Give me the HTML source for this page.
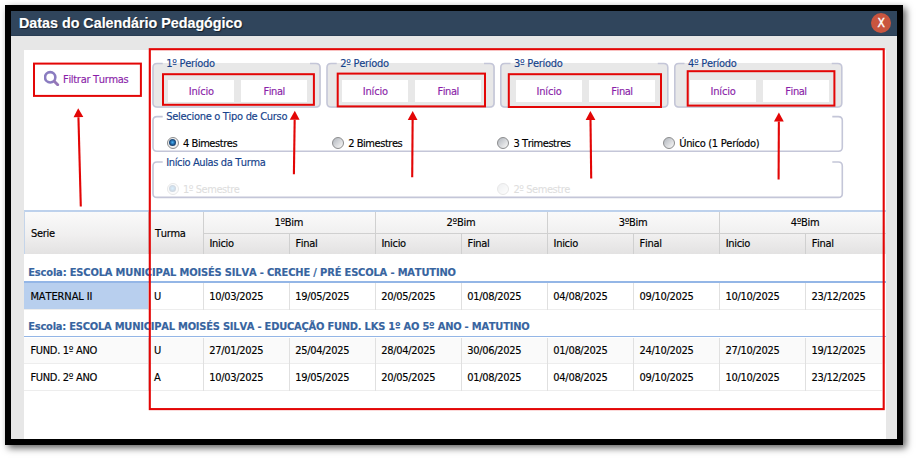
<!DOCTYPE html>
<html><head><meta charset="utf-8"><title>Datas do Calendário Pedagógico</title>
<style>
*{box-sizing:border-box;margin:0;padding:0}
html,body{width:916px;height:458px;background:#fff;overflow:hidden}
body{position:relative;font-family:"DejaVu Sans Condensed","Liberation Sans",sans-serif;font-size:11px;color:#000;letter-spacing:-0.3px;-webkit-text-stroke:0.15px;font-variant-ligatures:none;font-kerning:none}
.abs{position:absolute}
#frame{left:5px;top:5px;width:898px;height:440px;background:#000;box-shadow:3px 3px 7px rgba(0,0,0,.62)}
#title{left:11px;top:11px;width:886.2px;height:25px;background:#30455c;border-bottom:1px solid #293d53;color:#fff;font:bold 14.3px "Liberation Sans",sans-serif;letter-spacing:0;line-height:24px;padding-left:8px;text-shadow:1px 1px 1px rgba(0,0,0,.55)}
#close{letter-spacing:0;left:871.3px;top:12.8px;width:20px;height:20px;border-radius:10px;background:#c9553f;color:#fff;font:12px "DejaVu Sans Condensed","Liberation Sans",sans-serif;text-align:center;line-height:20px;-webkit-text-stroke:0.35px}
#body{left:11px;top:36px;width:886.2px;height:403px;background:#e7e7e7}
#panel{left:24.3px;top:50px;width:861.5px;height:389px;background:#fff}
.fs{border:2px solid #d0d2e1;border-radius:5px}
.leg{color:#15428b;line-height:13px;white-space:nowrap}
.btn{background:#fff;color:#8b1fa9;letter-spacing:-0.15px;text-align:center;white-space:nowrap}
.radio{width:12.3px;height:12.3px;border-radius:50%;border:1.5px solid #8b8c8d;background:linear-gradient(135deg,#bcc0c6 15%,#f0f0f0 85%)}
.radio.on{background:#f0f0f0}
.radio.on::after{content:"";position:absolute;left:1.4px;top:1.4px;width:7.1px;height:7.1px;border-radius:50%;background:radial-gradient(circle at 50% 48%,#4db4f2 0,#2c80c2 28%,#1a4a7e 55%,#14304f 100%)}
.lbl{white-space:nowrap;line-height:13px}
.dis{opacity:.13}
.radio.dis{opacity:.2}
.hd{background:linear-gradient(#fafafa,#f0efef 55%,#e3e2e2);}
.hc{white-space:nowrap;line-height:13px}
.vl{width:1px;background:#d0d0d0}
.grp{color:#3764a0;font-weight:bold;letter-spacing:-0.13px;white-space:nowrap;line-height:13px}
.gl{height:1.7px;background:#94b6e6}
.cell{white-space:nowrap;line-height:13px}
</style></head><body>
<div id="frame" class="abs"></div>
<div id="title" class="abs">Datas do Calendário Pedagógico</div>
<div id="body" class="abs"></div>
<div id="close" class="abs">X</div>
<div id="panel" class="abs"></div>
<div class="abs" style="left:44px;top:70px;width:16px;height:16px"><svg width="16" height="16" viewBox="0 0 16 16"><circle cx="6.2" cy="7.3" r="5.15" fill="none" stroke="#8a7cc0" stroke-width="2.6"/><line x1="10.2" y1="11.3" x2="13.7" y2="14.8" stroke="#9577b8" stroke-width="2.9" stroke-linecap="round"/></svg></div>
<div class="abs lbl" style="left:63px;top:73px;color:#8b1fa9">Filtrar Turmas</div>
<div class="abs" style="left:152.5px;top:63px;width:168px;height:44.5px;background:#e8e8e8;border-radius:5px"></div>
<div class="abs leg" style="left:166.3px;top:56.7px">1º Período</div>
<div class="abs btn" style="left:168.4px;top:79.5px;width:65.8px;height:22.5px;line-height:24.5px">Início</div>
<div class="abs btn" style="left:241.3px;top:79.5px;width:65.8px;height:22.5px;line-height:24.5px;letter-spacing:-0.45px">Final</div>
<div class="abs" style="left:326.5px;top:63px;width:168px;height:44.5px;background:#e8e8e8;border-radius:5px"></div>
<div class="abs leg" style="left:340.3px;top:56.7px">2º Período</div>
<div class="abs btn" style="left:342.4px;top:79.5px;width:65.8px;height:22.5px;line-height:24.5px">Início</div>
<div class="abs btn" style="left:415.3px;top:79.5px;width:65.8px;height:22.5px;line-height:24.5px;letter-spacing:-0.45px">Final</div>
<div class="abs" style="left:500.3px;top:63px;width:168px;height:44.5px;background:#e8e8e8;border-radius:5px"></div>
<div class="abs leg" style="left:514.1px;top:56.7px">3º Período</div>
<div class="abs btn" style="left:516.2px;top:79.5px;width:65.8px;height:22.5px;line-height:24.5px">Início</div>
<div class="abs btn" style="left:589.1px;top:79.5px;width:65.8px;height:22.5px;line-height:24.5px;letter-spacing:-0.45px">Final</div>
<div class="abs" style="left:674.3px;top:63px;width:168px;height:44.5px;background:#e8e8e8;border-radius:5px"></div>
<div class="abs leg" style="left:688.1px;top:56.7px">4º Período</div>
<div class="abs btn" style="left:690.2px;top:79.5px;width:65.8px;height:22.5px;line-height:24.5px">Início</div>
<div class="abs btn" style="left:763.1px;top:79.5px;width:65.8px;height:22.5px;line-height:24.5px;letter-spacing:-0.45px">Final</div>
<div class="abs leg" style="left:166.3px;top:109.8px">Selecione o Tipo de Curso</div>
<div class="abs radio on" style="left:166.6px;top:136.8px"></div><div class="abs lbl" style="left:183px;top:137px;letter-spacing:-0.45px">4 Bimestres</div>
<div class="abs radio" style="left:331.8px;top:136.8px"></div><div class="abs lbl" style="left:348.2px;top:137px;letter-spacing:-0.45px">2 Bimestres</div>
<div class="abs radio" style="left:497.1px;top:136.8px"></div><div class="abs lbl" style="left:513.5px;top:137px;letter-spacing:-0.45px">3 Trimestres</div>
<div class="abs radio" style="left:662.8px;top:136.8px"></div><div class="abs lbl" style="left:679.2px;top:137px;letter-spacing:-0.45px"><span style="letter-spacing:-0.3px">Único (1 Período)</span></div>
<div class="abs leg" style="left:166.3px;top:155.7px"><span style="letter-spacing:-0.38px">Início Aulas da Turma</span></div>
<div class="abs radio dis on" style="left:166.6px;top:182.8px"></div><div class="abs lbl dis" style="left:183px;top:183px;letter-spacing:-0.45px">1º Semestre</div>
<div class="abs radio dis" style="left:497.1px;top:182.8px"></div><div class="abs lbl dis" style="left:513.5px;top:183px;letter-spacing:-0.45px">2º Semestre</div>
<svg class="abs" style="left:0;top:0" width="916" height="458" viewBox="0 0 916 458"><path d="M162.7 63.5 H157 Q153 63.5 153 67.5 V103 Q153 107 157 107 H316 Q320 107 320 103 V67.5 Q320 63.5 316 63.5 H310 M336.7 63.5 H331 Q327 63.5 327 67.5 V103 Q327 107 331 107 H490 Q494 107 494 103 V67.5 Q494 63.5 490 63.5 H484 M510.5 63.5 H504.8 Q500.8 63.5 500.8 67.5 V103 Q500.8 107 504.8 107 H663.8 Q667.8 107 667.8 103 V67.5 Q667.8 63.5 663.8 63.5 H657.8 M684.5 63.5 H678.8 Q674.8 63.5 674.8 67.5 V103 Q674.8 107 678.8 107 H837.8 Q841.8 107 841.8 103 V67.5 Q841.8 63.5 837.8 63.5 H831.8 M162.7 116.6 H157 Q153 116.6 153 120.6 V147.2 Q153 151.2 157 151.2 H838.3 Q842.3 151.2 842.3 147.2 V120.6 Q842.3 116.6 838.3 116.6 H832.3 M162.7 162 H157 Q153 162 153 166 V193.4 Q153 197.4 157 197.4 H838.3 Q842.3 197.4 842.3 193.4 V166 Q842.3 162 838.3 162 H832.3" fill="none" stroke="#c4c6d8" stroke-width="1.6"/></svg>
<div class="abs" style="left:24px;top:210.4px;width:862px;height:1.9px;background:#bdd1ec"></div>
<div class="abs hd" style="left:24px;top:212px;width:862px;height:42.3px"></div>
<div class="abs vl" style="left:147.6px;top:212px;height:42px"></div>
<div class="abs vl" style="left:202.8px;top:212px;height:42px"></div>
<div class="abs vl" style="left:374.88px;top:212px;height:42px"></div>
<div class="abs vl" style="left:546.96px;top:212px;height:42px"></div>
<div class="abs vl" style="left:719.04px;top:212px;height:42px"></div>
<div class="abs vl" style="left:288.84px;top:233px;height:21px"></div>
<div class="abs vl" style="left:460.92px;top:233px;height:21px"></div>
<div class="abs vl" style="left:633px;top:233px;height:21px"></div>
<div class="abs vl" style="left:805.08px;top:233px;height:21px"></div>
<div class="abs" style="left:202.8px;top:233px;width:683.2px;height:1px;background:#d0d0d0"></div>
<div class="abs hc" style="left:31px;top:227.3px">Serie</div>
<div class="abs hc" style="left:155px;top:227.3px">Turma</div>
<div class="abs" style="left:24px;top:211px;width:1px;height:43px;background:#c5d5ea"></div>
<div class="abs hc" style="left:202.8px;top:216px;width:172.08px;text-align:center">1ºBim</div>
<div class="abs hc" style="left:209.4px;top:237px">Inicio</div>
<div class="abs hc" style="left:295.44px;top:237px">Final</div>
<div class="abs hc" style="left:374.88px;top:216px;width:172.08px;text-align:center">2ºBim</div>
<div class="abs hc" style="left:381.48px;top:237px">Inicio</div>
<div class="abs hc" style="left:467.52px;top:237px">Final</div>
<div class="abs hc" style="left:546.96px;top:216px;width:172.08px;text-align:center">3ºBim</div>
<div class="abs hc" style="left:553.56px;top:237px">Inicio</div>
<div class="abs hc" style="left:639.6px;top:237px">Final</div>
<div class="abs hc" style="left:719.04px;top:216px;width:172.08px;text-align:center">4ºBim</div>
<div class="abs hc" style="left:725.64px;top:237px">Inicio</div>
<div class="abs hc" style="left:811.68px;top:237px">Final</div>
<div class="abs grp" style="left:28.2px;top:265.5px;letter-spacing:-0.155px">Escola: ESCOLA MUNICIPAL MOISÉS SILVA - CRECHE / PRÉ ESCOLA - MATUTINO</div>
<div class="abs gl" style="left:24px;top:281.2px;width:862px"></div>
<div class="abs" style="left:24px;top:282.5px;width:123.6px;height:27px;background:#b8cfee"></div>
<div class="abs" style="left:24px;top:308.5px;width:858px;height:1px;background:#ededed"></div>
<div class="abs vl" style="left:147.6px;top:282.5px;height:27px;background:#e0e0e0"></div>
<div class="abs vl" style="left:202.8px;top:282.5px;height:27px;background:#e0e0e0"></div>
<div class="abs vl" style="left:288.84px;top:282.5px;height:27px;background:#e0e0e0"></div>
<div class="abs vl" style="left:374.88px;top:282.5px;height:27px;background:#e0e0e0"></div>
<div class="abs vl" style="left:460.92px;top:282.5px;height:27px;background:#e0e0e0"></div>
<div class="abs vl" style="left:546.96px;top:282.5px;height:27px;background:#e0e0e0"></div>
<div class="abs vl" style="left:633px;top:282.5px;height:27px;background:#e0e0e0"></div>
<div class="abs vl" style="left:719.04px;top:282.5px;height:27px;background:#e0e0e0"></div>
<div class="abs vl" style="left:805.08px;top:282.5px;height:27px;background:#e0e0e0"></div>
<div class="abs cell" style="left:30.4px;top:289.8px;letter-spacing:-0.1px">MATERNAL II</div>
<div class="abs cell" style="left:154px;top:289.8px">U</div>
<div class="abs cell" style="left:209.2px;top:289.8px">10/03/2025</div>
<div class="abs cell" style="left:295.24px;top:289.8px">19/05/2025</div>
<div class="abs cell" style="left:381.28px;top:289.8px">20/05/2025</div>
<div class="abs cell" style="left:467.32px;top:289.8px">01/08/2025</div>
<div class="abs cell" style="left:553.36px;top:289.8px">04/08/2025</div>
<div class="abs cell" style="left:639.4px;top:289.8px">09/10/2025</div>
<div class="abs cell" style="left:725.44px;top:289.8px">10/10/2025</div>
<div class="abs cell" style="left:811.48px;top:289.8px">23/12/2025</div>
<div class="abs grp" style="left:28.2px;top:319.8px;letter-spacing:-0.215px">Escola: ESCOLA MUNICIPAL MOISÉS SILVA - EDUCAÇÃO FUND. LKS 1º AO 5º ANO - MATUTINO</div>
<div class="abs gl" style="left:24px;top:335.7px;width:862px"></div>
<div class="abs" style="left:24px;top:337.5px;width:862px;height:26.5px;background:#fafafa"></div>
<div class="abs" style="left:24px;top:363px;width:858px;height:1px;background:#ededed"></div>
<div class="abs vl" style="left:147.6px;top:337.5px;height:26.5px;background:#e0e0e0"></div>
<div class="abs vl" style="left:202.8px;top:337.5px;height:26.5px;background:#e0e0e0"></div>
<div class="abs vl" style="left:288.84px;top:337.5px;height:26.5px;background:#e0e0e0"></div>
<div class="abs vl" style="left:374.88px;top:337.5px;height:26.5px;background:#e0e0e0"></div>
<div class="abs vl" style="left:460.92px;top:337.5px;height:26.5px;background:#e0e0e0"></div>
<div class="abs vl" style="left:546.96px;top:337.5px;height:26.5px;background:#e0e0e0"></div>
<div class="abs vl" style="left:633px;top:337.5px;height:26.5px;background:#e0e0e0"></div>
<div class="abs vl" style="left:719.04px;top:337.5px;height:26.5px;background:#e0e0e0"></div>
<div class="abs vl" style="left:805.08px;top:337.5px;height:26.5px;background:#e0e0e0"></div>
<div class="abs cell" style="left:30.4px;top:344px">FUND. 1º ANO</div>
<div class="abs cell" style="left:154px;top:344px">U</div>
<div class="abs cell" style="left:209.2px;top:344px">27/01/2025</div>
<div class="abs cell" style="left:295.24px;top:344px">25/04/2025</div>
<div class="abs cell" style="left:381.28px;top:344px">28/04/2025</div>
<div class="abs cell" style="left:467.32px;top:344px">30/06/2025</div>
<div class="abs cell" style="left:553.36px;top:344px">01/08/2025</div>
<div class="abs cell" style="left:639.4px;top:344px">24/10/2025</div>
<div class="abs cell" style="left:725.44px;top:344px">27/10/2025</div>
<div class="abs cell" style="left:811.48px;top:344px">19/12/2025</div>
<div class="abs" style="left:24px;top:389.5px;width:858px;height:1px;background:#ededed"></div>
<div class="abs vl" style="left:147.6px;top:364px;height:26.5px;background:#e0e0e0"></div>
<div class="abs vl" style="left:202.8px;top:364px;height:26.5px;background:#e0e0e0"></div>
<div class="abs vl" style="left:288.84px;top:364px;height:26.5px;background:#e0e0e0"></div>
<div class="abs vl" style="left:374.88px;top:364px;height:26.5px;background:#e0e0e0"></div>
<div class="abs vl" style="left:460.92px;top:364px;height:26.5px;background:#e0e0e0"></div>
<div class="abs vl" style="left:546.96px;top:364px;height:26.5px;background:#e0e0e0"></div>
<div class="abs vl" style="left:633px;top:364px;height:26.5px;background:#e0e0e0"></div>
<div class="abs vl" style="left:719.04px;top:364px;height:26.5px;background:#e0e0e0"></div>
<div class="abs vl" style="left:805.08px;top:364px;height:26.5px;background:#e0e0e0"></div>
<div class="abs cell" style="left:30.4px;top:370.5px">FUND. 2º ANO</div>
<div class="abs cell" style="left:154px;top:370.5px">A</div>
<div class="abs cell" style="left:209.2px;top:370.5px">10/03/2025</div>
<div class="abs cell" style="left:295.24px;top:370.5px">19/05/2025</div>
<div class="abs cell" style="left:381.28px;top:370.5px">20/05/2025</div>
<div class="abs cell" style="left:467.32px;top:370.5px">01/08/2025</div>
<div class="abs cell" style="left:553.36px;top:370.5px">04/08/2025</div>
<div class="abs cell" style="left:639.4px;top:370.5px">09/10/2025</div>
<div class="abs cell" style="left:725.44px;top:370.5px">10/10/2025</div>
<div class="abs cell" style="left:811.48px;top:370.5px">23/12/2025</div>
<svg class="abs" style="left:0;top:0" width="916" height="458" viewBox="0 0 916 458"><rect x="34" y="63.6" width="106.9" height="32.3" fill="none" stroke="#e30606" stroke-width="2"/><rect x="149.8" y="49.2" width="733.9" height="359.9" fill="none" stroke="#e30606" stroke-width="2.1"/><rect x="163" y="74.2" width="150.9" height="30.6" fill="none" stroke="#e30606" stroke-width="2"/><rect x="337.7" y="73.6" width="147.3" height="32.8" fill="none" stroke="#e30606" stroke-width="2"/><rect x="508.8" y="74.2" width="152.2" height="32.8" fill="none" stroke="#e30606" stroke-width="2"/><rect x="687.7" y="71.2" width="146.7" height="34.4" fill="none" stroke="#e30606" stroke-width="2"/><line x1="80.8" y1="206.5" x2="78.438" y2="117.197" stroke="#e30606" stroke-width="2.1"/><polygon points="78.2,108.2 83.3363,117.067 73.5397,117.326" fill="#e30606"/><line x1="293.9" y1="174.2" x2="294.672" y2="119.699" stroke="#e30606" stroke-width="2.1"/><polygon points="294.8,110.7 299.572,119.769 289.773,119.63" fill="#e30606"/><line x1="412.2" y1="177.3" x2="412.632" y2="120" stroke="#e30606" stroke-width="2.1"/><polygon points="412.7,111 417.532,120.037 407.732,119.963" fill="#e30606"/><line x1="591.2" y1="178.6" x2="590.507" y2="119.999" stroke="#e30606" stroke-width="2.1"/><polygon points="590.4,111 595.406,119.941 585.607,120.057" fill="#e30606"/><line x1="778.6" y1="179.4" x2="778.86" y2="121.6" stroke="#e30606" stroke-width="2.1"/><polygon points="778.9,112.6 783.76,121.622 773.96,121.578" fill="#e30606"/></svg>
</body></html>
